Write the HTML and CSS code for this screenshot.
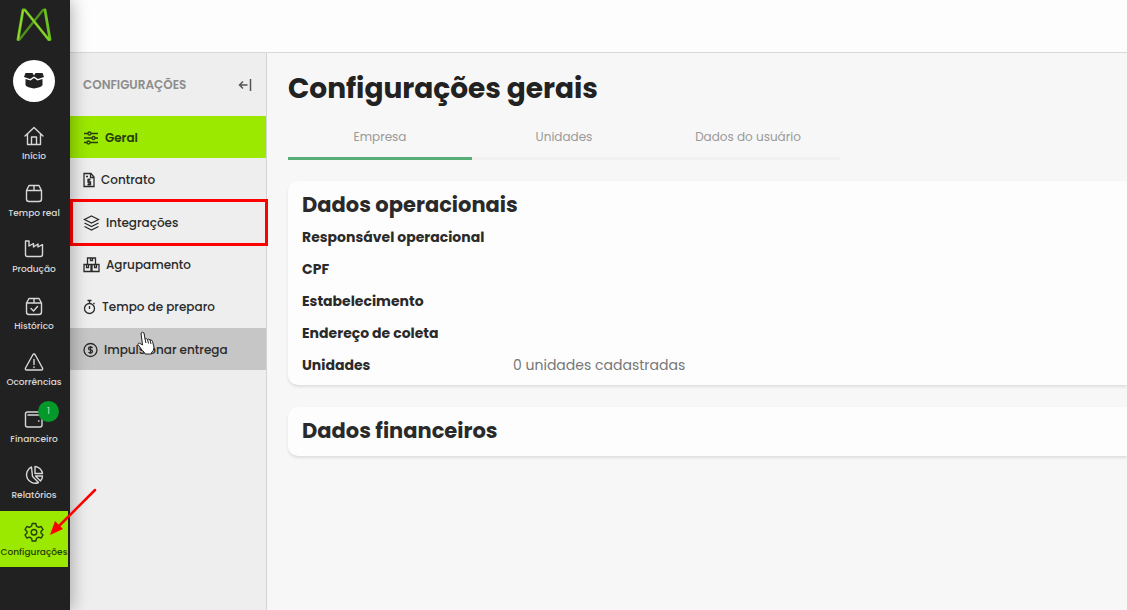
FILE: index.html
```html
<!DOCTYPE html>
<html lang="pt-BR">
<head>
<meta charset="utf-8">
<title>Configurações gerais</title>
<link rel="stylesheet" href="styles.css">
</head>
<body>
<div class="app">
  <nav class="rail" aria-label="Principal">
    <a class="logo" href="#" aria-label="Página inicial">
      <svg width="36" height="34" viewBox="0 0 36 34" fill="none" stroke-linecap="round" stroke-linejoin="round">
        <path d="M29 2H27L3.500 31.500H2" stroke="#4f8f1d" stroke-width="2.400"/>
        <path d="M2 31.500 7 2H9L32.500 31.500H34L29 2" stroke="#6cc21c" stroke-width="2.800"/>
        <path d="M2 31 7 2.500M9 2.500 33 31.500" stroke="#a5e03a"/>
      </svg>
    </a>
    <button class="avatar" aria-label="Perfil">
      <svg width="20" height="16" viewBox="0 0 20 16" fill="#222">
        <path d="M1.500 0H8.500L10 2.500 11.500 0H18.500L20 4 14 6 10 3.500 6 6 0 4Z"/>
        <path d="M1.500 6 6.500 7.500 10 5 13.500 7.500 18.500 6V12Q18 14 10 15.500 2 14 1.500 12Z"/>
      </svg>
    </button>
    <ul class="rail-list">
      <li><a class="rail-item" href="#"><svg class="rail-icon" viewBox="0 0 22 22"><path d="M2 11 11 2.500 20 11M4.500 9V19.500H17.500V9M8.500 19V12H13.500V19"/></svg>Início</a></li>
      <li><a class="rail-item" href="#"><svg class="rail-icon" viewBox="0 0 22 22"><path d="M3.500 8.500H18.500V17Q18.500 19.500 16 19.500H6Q3.500 19.500 3.500 17ZM3.500 8.500 6 3.500H16L18.500 8.500M11 3.500V8.500"/></svg>Tempo real</a></li>
      <li><a class="rail-item" href="#"><svg class="rail-icon" viewBox="0 0 22 22"><path d="M2.500 3H6V8L10.500 5.500V9L15 6V9L19.500 6.500V16.500Q19.500 18.500 17.500 18.500H4.500Q2.500 18.500 2.500 16.500Z"/></svg>Produção</a></li>
      <li><a class="rail-item" href="#"><svg class="rail-icon" viewBox="0 0 22 22"><path d="M3.500 8H18.500V17Q18.500 19.500 16 19.500H6Q3.500 19.500 3.500 17ZM3.500 8 6 3.500H16L18.500 8M11 3.500V8M8 13.500 10.500 16 14.500 11.500"/></svg>Histórico</a></li>
      <li><a class="rail-item" href="#"><svg class="rail-icon" viewBox="0 0 22 22"><path d="M11 3Q11.700 3 12.300 4L19.500 17Q20 19 18.500 19H3.500Q2 19 2.500 17L9.700 4Q10.300 3 11 3ZM11 8.500V13.500M11 16V16.500"/></svg>Ocorrências</a></li>
      <li><a class="rail-item" href="#"><svg class="rail-icon" viewBox="0 0 22 22"><path d="M18 6.500V5Q18 4 16.500 4H4.500Q2.500 4 2.500 6V17Q2.500 19 4.500 19H17Q19 19 19 17V9Q19 7 17 7H5M15.500 13H16"/></svg>Financeiro<span class="badge">1</span></a></li>
      <li><a class="rail-item" href="#"><svg class="rail-icon" viewBox="0 0 22 22"><path d="M8.500 3A8.500 8.500 0 1 0 15.500 18.500L9.500 12.500ZM12 2.500V9.500H19.500A8 8 0 0 0 12 2.500ZM12.500 12H19.500Q19.500 15 17.500 17Z"/></svg>Relatórios</a></li>
      <li><a class="rail-item is-active" href="#" aria-current="page"><svg class="rail-icon" viewBox="0 0 22 22"><path d="M9.200 2.500H12.800L13.500 5.200 15.500 6.300 18.200 5.500 20 8.600 18 10.500V12L20 13.900 18.200 17 15.500 16.200 13.500 17.300 12.800 20H9.200L8.500 17.300 6.500 16.200 3.800 17 2 13.900 4 12V10.500L2 8.600 3.800 5.500 6.500 6.300 8.500 5.200Z"/><circle cx="11" cy="11.250" r="2.800"/></svg>Configurações</a></li>
    </ul>
    <svg class="pointer-arrow" width="50" height="50" viewBox="0 0 50 50" aria-hidden="true">
      <path d="M47 3 12 38" stroke="#f00" stroke-width="2.500" stroke-linecap="round"/>
      <path d="M2 48 7 34 15 42Z" fill="#f00"/>
    </svg>
  </nav>

  <div class="page">
    <header class="topbar"></header>
    <div class="body">
      <aside class="submenu">
        <div class="submenu-head">
          <span>CONFIGURAÇÕES</span>
          <button class="collapse" aria-label="Recolher menu"><svg width="14" height="12" viewBox="0 0 14 12" fill="none" stroke="#555" stroke-width="1.500"><path d="M9.500 6H1.500M5 2.500 1.500 6 5 9.500M12.500 0V12"/></svg></button>
        </div>
        <ul class="submenu-list">
          <li><a class="sub-item is-active" href="#"><svg width="16" height="16" viewBox="0 0 16 16"><path d="M1 3.500H5M8 3.500H15M1 8H9M12 8H15M1 12.500H4M7 12.500H15"/><circle cx="6.500" cy="3.500" r="1.500"/><circle cx="10.500" cy="8" r="1.500"/><circle cx="5.500" cy="12.500" r="1.500"/></svg>Geral</a></li>
          <li><a class="sub-item" href="#"><svg width="12" height="16" viewBox="0 0 12 16"><path d="M1 2.500V14.500H11V5L8 1.500H1ZM7.500 2V5.500H11M7.500 7.500H5V10H7.500V12.500H4.500M6 6.500V13.500M3 4.500H5"/></svg>Contrato</a></li>
          <li><a class="sub-item is-marked" href="#"><svg width="17" height="16" viewBox="0 0 17 16"><path d="M8.500 1 15.500 4.500 8.500 8 1.500 4.500ZM1.500 8 8.500 11.500 15.500 8M1.500 11.500 8.500 15 15.500 11.500"/></svg>Integrações</a></li>
          <li><a class="sub-item" href="#"><svg width="17" height="16" viewBox="0 0 17 16"><path d="M4.500 7V1H12.500V7M7.500 1V3.500H9.500V1M1 7.500H8V14.500H1ZM9 7.500H16V14.500H9ZM3.500 7.500V10.500H5.500V7.500M11.500 7.500V10.500H13.500V7.500"/></svg>Agrupamento</a></li>
          <li><a class="sub-item" href="#"><svg width="13" height="16" viewBox="0 0 13 16"><circle cx="6.500" cy="9.500" r="5"/><path d="M4.500 1.500H8.500M6.500 2V4.500M6.500 7V10M10.500 4 11.500 5"/></svg>Tempo de preparo</a></li>
          <li><a class="sub-item is-hover" href="#"><svg width="15" height="16" viewBox="0 0 15 16"><circle cx="7.500" cy="8" r="6.500"/><path d="M9.500 6Q9 5 7.500 5 5.500 5 5.500 6.500T7.500 8 9.500 9.500 7.500 11Q6 11 5.500 10M7.500 4V12"/></svg>Impulsionar entrega
            <svg class="cursor" width="18" height="24" viewBox="0 0 18 24" aria-hidden="true"><path d="M4 2Q5.500 .5 7 2L8 8Q9.500 7 10.500 8.500 12 7.500 13 9 15 8.500 15.500 10.500L17 16Q17 20 14.500 21.500V23H8L7.500 21.500Q5 19.500 3.500 17L1 13.500Q1 11 4 13L5.500 14Z" fill="#fff" stroke="#222"/><path d="M8 8 9 12M10.500 8.500 11.500 12.500M13 9 14 13" stroke="#222"/></svg></a></li>
        </ul>
      </aside>

      <main class="content">
        <h1>Configurações gerais</h1>
        <div class="tabs" role="tablist">
          <button class="tab is-selected" role="tab" aria-selected="true">Empresa</button>
          <button class="tab" role="tab" aria-selected="false">Unidades</button>
          <button class="tab" role="tab" aria-selected="false">Dados do usuário</button>
        </div>
        <section class="card">
          <h2>Dados operacionais</h2>
          <dl class="fields">
            <dt>Responsável operacional</dt><dd></dd>
            <dt>CPF</dt><dd></dd>
            <dt>Estabelecimento</dt><dd></dd>
            <dt>Endereço de coleta</dt><dd></dd>
            <dt>Unidades</dt><dd>0 unidades cadastradas</dd>
          </dl>
        </section>
        <section class="card">
          <h2>Dados financeiros</h2>
        </section>
      </main>
    </div>
  </div>
</div>
</body>
</html>
```
FILE: styles.css
```css
* { box-sizing: border-box; }

body {
  margin: 0;
  font-family: Poppins, Inter, "Liberation Sans", sans-serif;
  font-size: 14px;
  color: #2a2a2a;
  background: #f7f7f7;
}

h1, h2, ul, dl, dd { margin: 0; padding: 0; }
ul { list-style: none; }
a { color: inherit; text-decoration: none; }
button { font: inherit; border: 0; padding: 0; background: none; cursor: pointer; }

.app { display: flex; min-height: 100vh; }

/* Dark icon rail */
.rail {
  position: relative;
  z-index: 2;
  flex: 0 0 70px;
  display: flex;
  flex-direction: column;
  align-items: center;
  padding: 8px 2px 0 0;
  background: #212121;
  box-shadow: 2px 0 16px rgba(0, 0, 0, .3);
}
.logo { height: 34px; }
.avatar {
  display: grid;
  place-items: center;
  width: 42px;
  height: 42px;
  margin: 18px 0 13px;
  border-radius: 50%;
  background: #fff;
}
.rail-list {
  display: grid;
  grid-auto-rows: 1fr;
  width: 100%;
  height: 452px;
}
.rail-item {
  position: relative;
  display: flex;
  flex-direction: column;
  align-items: center;
  gap: 2px;
  height: 100%;
  padding-top: 10px;
  font-size: 9px;
  font-weight: 500;
  line-height: 14px;
  color: #d8d8d8;
}
.rail-icon {
  width: 22px;
  height: 22px;
  fill: none;
  stroke: currentColor;
  stroke-width: 1.4;
  stroke-linejoin: round;
  stroke-linecap: round;
}
.rail-item.is-active { background: #9be800; color: #26400a; }
.badge {
  position: absolute;
  top: 3px;
  left: 38px;
  width: 21px;
  height: 21px;
  border-radius: 50%;
  background: #05982b;
  color: #b5e6bf;
  font-weight: 400;
  line-height: 21px;
  text-align: center;
}
.pointer-arrow {
  position: absolute;
  top: 487px;
  left: 48px;
  fill: none;
}

.page { flex: 1; display: flex; flex-direction: column; min-width: 0; }
.topbar { height: 53px; background: #fdfdfd; border-bottom: 1px solid #d9d9d9; }
.body { flex: 1; display: flex; }

/* Settings submenu */
.submenu {
  flex: 0 0 197px;
  background: #eee;
  border-right: 1px solid #d4d4d4;
}
.submenu-head {
  display: flex;
  align-items: center;
  justify-content: space-between;
  height: 63px;
  padding: 0 14px 0 13px;
  font-size: 12px;
  font-weight: 600;
  color: #8c8c8c;
}
.collapse { display: flex; }
.submenu-list { display: grid; grid-auto-rows: 1fr; height: 254px; }
.sub-item {
  position: relative;
  display: flex;
  align-items: center;
  gap: 6px;
  height: 100%;
  padding: 2px 0 0 13px;
  font-size: 12px;
  font-weight: 500;
  color: #2a2a2a;
}
.sub-item svg { fill: none; stroke: currentColor; stroke-width: 1.3; }
.sub-item.is-active { background: #9be800; font-weight: 600; color: #253d0a; }
.sub-item.is-hover { background: #c6c6c6; }
.sub-item.is-marked::after {
  content: "";
  position: absolute;
  inset: -2px -2px -3px 0;
  border: 3px solid #f00;
}
.sub-item .cursor { position: absolute; top: 3px; left: 67px; stroke-width: 1; }

/* Main content */
.content { flex: 1; min-width: 0; padding: 16px 0 32px 21px; }
h1 { font-size: 28px; font-weight: 700; line-height: 40px; color: #222; }
.tabs {
  display: grid;
  grid-template-columns: repeat(3, 1fr);
  max-width: 552px;
  margin: 8px 0 21px;
}
.tab {
  height: 43px;
  border-bottom: 3px solid #f1f1f1;
  font-size: 12px;
  font-weight: 400;
  color: #999;
}
.tab.is-selected { border-bottom-color: #56ad76; }
.card {
  margin-bottom: 22px;
  padding: 8px 14px 4px;
  border-radius: 10px 0 0 10px;
  background: #fdfdfd;
  box-shadow: 0 2px 3px rgba(0, 0, 0, .1);
}
.card h2 { font-size: 21px; font-weight: 700; line-height: 32px; }
.card h2:last-child { padding-bottom: 5px; }
.fields { display: grid; grid-template-columns: 211px 1fr; line-height: 32px; }
.fields dt { font-weight: 700; }
.fields dd { color: #777; }
```
